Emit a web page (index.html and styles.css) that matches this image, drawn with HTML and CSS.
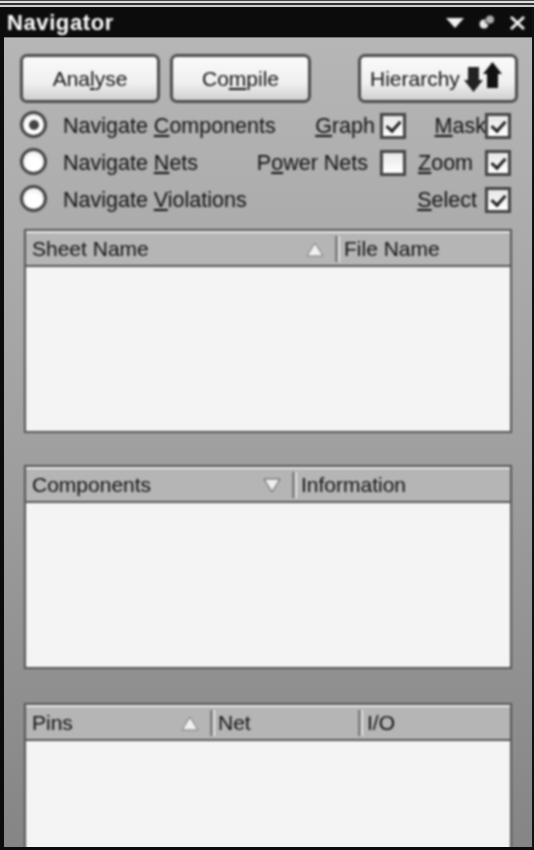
FILE: index.html

```html
<!DOCTYPE html>
<html lang="en">
<head>
  <meta charset="UTF-8" />
  <title>Navigator</title>
  <link rel="stylesheet" href="styles.css">
</head>
<body>

  <div class="panel">

    <!-- Title bar -->
    <div class="top-lines"></div>
    <div class="titlebar">
      <h1>Navigator</h1>
      <div class="title-icons">
        <svg width="20" height="12" viewBox="0 0 20 12"><path d="M1 1H19L10 11Z" fill="#f2f2f2"/></svg>
        <svg width="18" height="16" viewBox="0 0 18 16"><circle cx="6" cy="9" r="4.5" fill="#e8e8e8"/><circle cx="12" cy="4.5" r="4" fill="#b0b0b0"/><path d="M7 6L11 10" stroke="#333" stroke-width="1.5"/></svg>
        <svg width="17" height="16" viewBox="0 0 17 16"><path d="M2 2L15 14M15 2L2 14" stroke="#f2f2f2" stroke-width="3"/></svg>
      </div>
    </div>

    <div class="content">

      <!-- Buttons -->
      <div class="buttons">
        <button class="button btn-analyse">Ana<u>l</u>yse</button>
        <button class="button btn-compile">Co<u>m</u>pile</button>
        <button class="button btn-hierarchy">
          <span>Hierarchy</span>
          <svg width="38" height="31" viewBox="0 0 38 31"><path d="M4 5H15V18H19L9.5 30L0 18H4Z" fill="#222"/><path d="M23 26V12H19L28.5 0L38 12H34V26Z" fill="#111"/></svg>
        </button>
      </div>

      <!-- Navigate options -->
      <div class="options">
        <div class="radio-row"><span class="radio checked"></span><span class="label">Navigate <u>C</u>omponents</span></div>
        <div class="check-row graph"><span><u>G</u>raph</span><span class="check on"></span></div>
        <div class="check-row mask"><span><u>M</u>ask</span><span class="check on"></span></div>

        <div class="radio-row"><span class="radio"></span><span class="label">Navigate <u>N</u>ets</span></div>
        <div class="check-row power"><span>P<u>o</u>wer Nets</span><span class="check"></span></div>
        <div class="check-row zoom"><span><u>Z</u>oom</span><span class="check on"></span></div>

        <div class="radio-row"><span class="radio"></span><span class="label">Navigate <u>V</u>iolations</span></div>
        <div></div>
        <div class="check-row select"><span><u>S</u>elect</span><span class="check on"></span></div>
      </div>

      <!-- Lists -->
      <div class="list list-sheets">
        <div class="list-head">
          <div class="col col-sheet">Sheet Name<span class="sort"><svg width="18" height="15" viewBox="0 0 18 15"><path d="M9 1L17 14H1Z" fill="#f0f0f0" stroke="#777"/></svg></span></div>
          <div class="col">File Name</div>
        </div>
      </div>

      <div class="list list-components">
        <div class="list-head">
          <div class="col col-comp">Components<span class="sort"><svg width="18" height="15" viewBox="0 0 18 15"><path d="M9 14L17 1H1Z" fill="#f0f0f0" stroke="#555"/></svg></span></div>
          <div class="col">Information</div>
        </div>
      </div>

      <div class="list list-pins">
        <div class="list-head">
          <div class="col col-pins">Pins<span class="sort"><svg width="18" height="15" viewBox="0 0 18 15"><path d="M9 1L17 14H1Z" fill="#f0f0f0" stroke="#777"/></svg></span></div>
          <div class="col col-net">Net</div>
          <div class="col">I/O</div>
        </div>
      </div>

    </div>
  </div>

</body>
</html>
```

FILE: styles.css

```css
* {
  box-sizing: border-box;
}

body {
  margin: 0;
  padding: 0;
  width: 534px;
  height: 850px;
  overflow: hidden;
  background: #fff;
  font-family: 'Liberation Sans', Arial, sans-serif;
  color: #111;
}

u {
  text-underline-offset: 2px;
}

.panel {
  height: 850px;
  display: flex;
  flex-direction: column;
  border-left: 4px solid #0c0c0c;
  border-right: 2px solid #111;
  border-bottom: 3px solid #0c0c0c;
  background: #0c0c0c;
}

.top-lines {
  height: 8px;
  margin-left: -4px;
  margin-right: -2px;
  background: linear-gradient(#444 0 1px, #ddd 1px 3px, #333 3px 5px, #ccc 5px 7px, #111 7px);
}

/* Title bar */
.titlebar {
  height: 30px;
  background: #0c0c0c;
  display: flex;
  align-items: center;
  justify-content: space-between;
  padding: 0 6px 0 3px;
  border-bottom: 1px solid #777;
}

.titlebar h1,
.title-icons {
  filter: blur(0.8px);
}

.titlebar h1 {
  margin: 0;
  font-size: 22px;
  font-weight: 700;
  letter-spacing: 0.6px;
  color: #fff;
}

.title-icons {
  display: flex;
  align-items: center;
  gap: 13px;
}

/* Main area */
.content {
  flex: 1;
  overflow: hidden;
  padding: 16px 0 0 16px;
  background: linear-gradient(#b6b6b6 0, #a0a0a0 50%, #858585 100%);
}

.buttons,
.options,
.list {
  filter: blur(0.8px);
}

.buttons {
  display: flex;
  height: 49px;
}

.button {
  flex: none;
  height: 49px;
  border: 3px solid #4c4c4c;
  border-radius: 7px;
  background: linear-gradient(#fafafa, #f0f0f0 60%, #d0d0d0);
  font-family: inherit;
  font-size: 21px;
  color: #111;
  padding: 0;
}

.btn-analyse {
  width: 140px;
}

.btn-compile {
  width: 141px;
  margin-left: 10px;
}

.btn-hierarchy {
  width: 160px;
  margin-left: 47px;
  padding-left: 9px;
  display: flex;
  align-items: center;
}

.btn-hierarchy svg {
  margin: -2px 0 0 4px;
}

/* Radio and checkbox rows */
.options {
  display: grid;
  grid-template-columns: 222px 164px 105px;
  grid-auto-rows: 37px;
  margin-top: 3px;
  font-size: 21.5px;
  width: 491px;
}

.radio-row {
  display: flex;
  align-items: center;
  white-space: nowrap;
}

.radio-row .label {
  padding-top: 4px;
}

.radio {
  flex: none;
  width: 27px;
  height: 27px;
  margin-right: 16px;
  border: 3px solid #444;
  border-radius: 50%;
  background: radial-gradient(circle at 50% 60%, #fff 40%, #ddd);
  display: flex;
  align-items: center;
  justify-content: center;
}

.radio.checked::after {
  content: "";
  width: 10px;
  height: 10px;
  border-radius: 50%;
  background: #444;
}

.check-row {
  display: flex;
  align-items: center;
  justify-content: flex-end;
  padding-top: 3px;
  white-space: nowrap;
}

.check {
  width: 26px;
  height: 26px;
  margin-left: 5px;
  border: 3px solid #444;
  background: linear-gradient(#e6e6e6, #fff);
  flex: none;
  position: relative;
}

.check.on::after {
  content: "";
  position: absolute;
  left: 6px;
  top: 2px;
  width: 6px;
  height: 11px;
  border: solid #222;
  border-width: 0 3px 3px 0;
  transform: rotate(42deg);
}

.mask .check {
  margin-left: -1px;
}

.power .check,
.zoom .check {
  margin-left: 12px;
}

.select .check {
  margin-left: 8px;
}

/* Lists */
.list {
  margin-left: 4px;
  width: 488px;
  border: 2px solid #555;
  background: #f4f4f4;
}

.list-sheets {
  height: 204px;
  margin-top: 12px;
}

.list-components {
  height: 204px;
  margin-top: 32px;
}

.list-pins {
  height: 180px;
  margin-top: 34px;
}

.list-head {
  height: 36px;
  display: flex;
  font-size: 21px;
  background: #b5b5b5;
  border-top: 2px solid #ececec;
  border-bottom: 2px solid #555;
}

.col {
  display: flex;
  align-items: center;
  padding-left: 6px;
  flex: none;
}

.col-sheet,
.col-comp,
.col-pins,
.col-net {
  justify-content: space-between;
  border-right: 3px solid #808080;
  box-shadow: 2px 0 0 #e6e6e6;
  margin: 3px 0;
}

.col-sheet {
  width: 312px;
}

.col-comp {
  width: 269px;
}

.col-pins {
  width: 187px;
}

.col-net {
  width: 148px;
  padding-left: 5px;
}

.sort {
  display: flex;
  margin-right: 11px;
}
```
